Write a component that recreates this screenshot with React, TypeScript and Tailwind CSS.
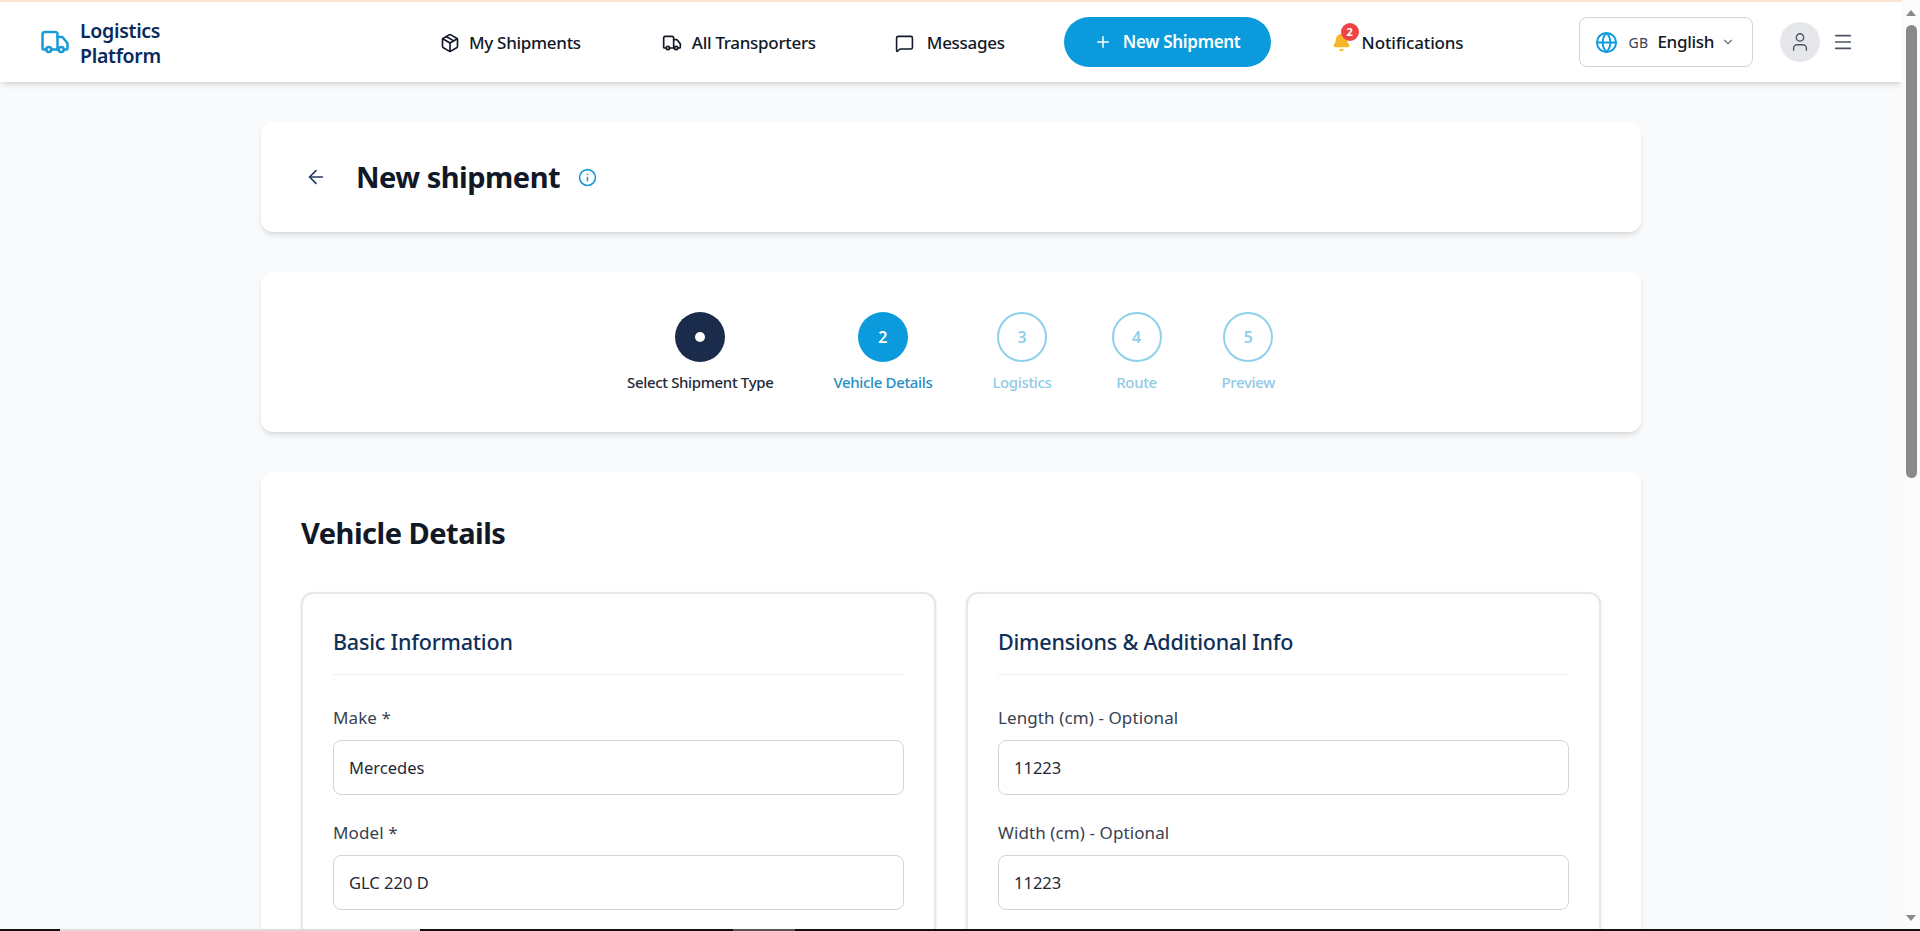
import { ArrowLeft, Bell, ChevronDown, Globe, Info, Menu, MessageSquare, Package, Plus, Truck, User } from "lucide-react";

const font = "font-['Noto_Sans',sans-serif]";

function Field({ label, value }: { label: string; value: string }) {
  return (
    <div className="mb-[26px]">
      <label className="block h-[24px] mb-[10px] text-[17px] leading-[24px] text-[#374151] tracking-[0.1px]">{label}</label>
      <input
        readOnly
        value={value}
        className="block w-full h-[55px] px-[15px] rounded-lg border border-[#d1d5db] bg-white text-[16.5px] text-[#1f2937] outline-none"
      />
    </div>
  );
}

function Section({ title, fields }: { title: string; fields: [string, string][] }) {
  return (
    <div className="h-[400px] rounded-xl border-2 border-[#e5e7eb] bg-white px-[30px] pt-[31px] shadow-sm">
      <h3 className="h-[34px] mb-[15px] text-[21.5px] leading-[34px] font-medium text-[#0f2f57] tracking-[-0.2px]">{title}</h3>
      <div className="border-t border-[#eceef1] pt-[31px]">
        {fields.map(([l, v]) => (
          <Field key={l} label={l} value={v} />
        ))}
      </div>
    </div>
  );
}

function Step({ label, n, state }: { label: string; n: number; state: "done" | "active" | "todo" }) {
  const circle =
    state === "done"
      ? "bg-[#1a2b4b]"
      : state === "active"
        ? "bg-[#0b9bdc] text-white"
        : "border-2 border-[#8fd0ea] text-[#8fd0ea]";
  const text = state === "done" ? "text-[#1f2937]" : state === "active" ? "text-[#1f8fc4]" : "text-[#8fcbe6]";
  return (
    <div className="flex flex-col items-center min-w-[50px]">
      <div className={`w-[50px] h-[50px] rounded-full flex items-center justify-center text-[16px] font-semibold ${circle}`}>
        {state === "done" ? <span className="block w-[10px] h-[10px] rounded-full bg-white" /> : n}
      </div>
      <span className={`mt-[10px] h-[20px] text-[15px] leading-[20px] font-medium tracking-[-0.35px] whitespace-nowrap ${text}`}>{label}</span>
    </div>
  );
}

function NavItem({ icon, label, className }: { icon: React.ReactNode; label: string; className: string }) {
  return (
    <a className={`mt-[2px] flex items-center text-[17px] font-medium text-[#111827] tracking-[-0.3px] whitespace-nowrap ${className}`}>
      {icon}
      {label}
    </a>
  );
}

export default function App() {
  return (
    <div className={`${font} h-[931px] w-[1920px] overflow-hidden flex flex-col bg-[#f9fafb]`}>
      <div className="flex h-[929px] shrink-0">
        <div className="flex-1 min-w-0 flex flex-col">
          <div className="h-[2px] shrink-0 bg-[#fbe3d2]" />
          <header className="h-[80px] shrink-0 bg-white shadow-md flex items-center">
            <div className="ml-[40px] w-[400px] flex items-center">
              <Truck size={30} strokeWidth={2} className="text-[#1a9ad6] shrink-0" />
              <span className="mt-[2px] ml-[10px] text-[19.5px] leading-[25px] font-semibold text-[#0a2a5c] tracking-[-0.3px]">
                Logistics
                <br />
                Platform
              </span>
            </div>
            <NavItem className="" icon={<Package size={20} className="mr-[9px]" />} label="My Shipments" />
            <NavItem className="ml-[81px]" icon={<Truck size={20} className="mr-[10px]" />} label="All Transporters" />
            <NavItem className="ml-[79px]" icon={<MessageSquare size={19} className="mr-[13px]" />} label="Messages" />
            <a className="ml-[59px] w-[207px] h-[50px] rounded-full bg-[#0b9bdc] text-white flex items-center justify-center text-[17px] font-semibold tracking-[-0.3px]">
              <Plus size={18} className="mr-[11px]" />
              New Shipment
            </a>
            <a className="ml-[62px] mt-[2px] flex items-center text-[17px] font-medium text-[#111827] tracking-[-0.15px]">
              <span className="relative w-[29px] h-[20px]">
                <Bell size={19} className="-ml-[1px] text-[#f5b62a] fill-[#f5b62a]" />
                <span className="absolute -top-[10px] left-[8px] w-[18px] h-[18px] rounded-full bg-[#ef4444] text-white text-[11px] leading-[18px] font-bold text-center">2</span>
              </span>
              Notifications
            </a>
            <div className="ml-[116px] w-[174px] h-[50px] rounded-lg border border-[#d1d5db] bg-white flex items-center pl-[15px]">
              <Globe size={23} className="text-[#0b9bdc]" />
              <span className="ml-[10px] text-[14px] text-[#374151] tracking-[0.3px]">GB</span>
              <span className="ml-[9px] text-[17px] font-medium text-[#111827] tracking-[-0.3px]">English</span>
              <ChevronDown size={14} className="ml-[7px] text-[#6b7280]" />
            </div>
            <div className="ml-[27px] w-[40px] h-[40px] rounded-full bg-[#e5e7eb] flex items-center justify-center">
              <User size={22} strokeWidth={1.5} className="text-[#4b5563]" />
            </div>
            <Menu size={22} strokeWidth={1.75} className="ml-[12px] text-[#4b5563]" />
          </header>

          <main className="w-[1380px] mx-auto pt-[40px] flex flex-col gap-[40px]">
            <section className="h-[110px] rounded-xl bg-white shadow-md px-[40px] flex items-center">
              <ArrowLeft size={22} strokeWidth={1.75} className="text-[#1f3a5f] ml-[4px]" />
              <h1 className="ml-[29px] text-[29px] font-bold text-[#111827] tracking-[-0.5px]">New shipment</h1>
              <Info size={19} className="ml-[18px] text-[#1a9ad6]" />
            </section>

            <section className="h-[160px] rounded-xl bg-white shadow-md pt-[40px] flex justify-center gap-[60px]">
              <Step n={1} label="Select Shipment Type" state="done" />
              <Step n={2} label="Vehicle Details" state="active" />
              <Step n={3} label="Logistics" state="todo" />
              <Step n={4} label="Route" state="todo" />
              <Step n={5} label="Preview" state="todo" />
            </section>

            <section className="h-[600px] rounded-xl bg-white shadow-md p-[40px]">
              <h2 className="h-[42px] mb-[38px] text-[29px] leading-[42px] font-bold text-[#111827] tracking-[-0.5px]">Vehicle Details</h2>
              <div className="grid grid-cols-[635px_635px] gap-[30px]">
                <Section title="Basic Information" fields={[["Make *", "Mercedes"], ["Model *", "GLC 220 D"]]} />
                <Section title="Dimensions & Additional Info" fields={[["Length (cm) - Optional", "11223"], ["Width (cm) - Optional", "11223"]]} />
              </div>
            </section>
          </main>
        </div>
        <div className="w-[18px] bg-[#fbfbfc] flex flex-col items-center">
          <svg width="10" height="6" viewBox="0 0 10 6" className="mt-[10px] text-[#8a8a8a]"><path d="M5 0 10 6H0z" fill="currentColor" /></svg>
          <div className="mt-[9px] w-[11px] h-[453px] rounded-full bg-[#8a8a8a]" />
          <svg width="10" height="6" viewBox="0 0 10 6" className="mt-auto mb-[8px] text-[#8a8a8a]"><path d="M5 6 10 0H0z" fill="currentColor" /></svg>
        </div>
      </div>
      <div className="h-[2px] shrink-0 flex bg-[#111111]">
        <div className="w-[60px]" />
        <div className="w-[360px] bg-[#dcdcdc]" />
        <div className="w-[313px]" />
        <div className="w-[62px] bg-[#555555]" />
      </div>
    </div>
  );
}
